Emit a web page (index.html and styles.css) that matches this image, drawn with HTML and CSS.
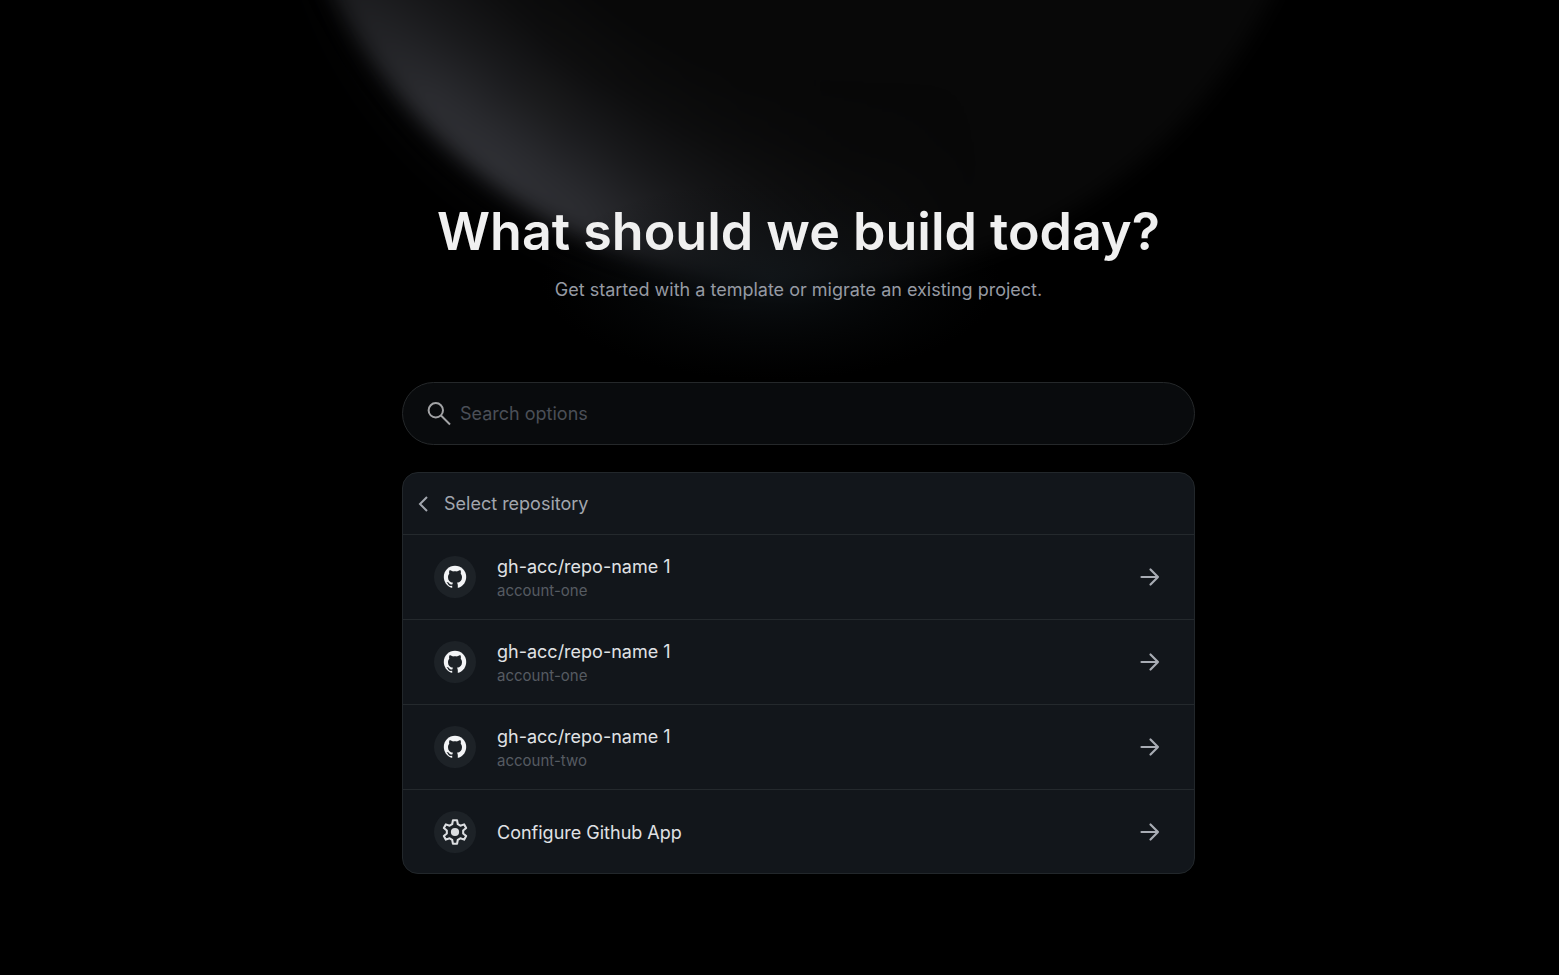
FILE: index.html
```html
<!DOCTYPE html>
<html lang="en">
<head>
<meta charset="utf-8">
<meta name="viewport" content="width=device-width, initial-scale=1">
<title>New project</title>
<link rel="stylesheet" href="styles.css">
</head>
<body>
<svg class="symbols" aria-hidden="true">
  <symbol id="github" viewBox="0 0 24 24">
    <circle cx="12" cy="12" r="11.200" fill="#f3f4f6"/>
    <path d="M9.200 24v-3.200c-2.800.5-3.700-.8-4.300-2-.3-.6-.7-1-1.300-1.400 1.200-.5 2.100.2 2.700 1.100.8 1.200 1.700 1.300 3 .9.1-.8.400-1.300.8-1.700-3.300-.4-5.100-2.100-5.100-5.500 0-1.500.5-2.600 1.300-3.500-.3-1-.3-2.200.2-3.500 1.300 0 2.400.6 3.500 1.300 1.300-.3 2.700-.3 4 0 1.100-.7 2.200-1.300 3.500-1.300.5 1.300.5 2.500.2 3.500.8.900 1.300 2 1.300 3.500 0 3.400-1.800 5.100-5.100 5.500.6.600.9 1.400.9 2.500V24Z" fill="#1d2227"/>
  </symbol>
  <symbol id="arrow" viewBox="0 0 24 24"><path d="M3.500 12H20M12.500 4.500 20 12l-7.500 7.500" fill="none" stroke="currentColor" stroke-width="2.200" stroke-linecap="round" stroke-linejoin="round"/></symbol>
</svg>
<main class="page">
  <svg class="planet" viewBox="0 0 1200 420" aria-hidden="true">
    <defs>
      <radialGradient id="rim" gradientUnits="userSpaceOnUse" cx="665" cy="-330" r="635">
        <stop offset=".64" stop-color="#303136" stop-opacity="0"/>
        <stop offset=".76" stop-color="#303136" stop-opacity=".16"/>
        <stop offset=".86" stop-color="#303136" stop-opacity=".52"/>
        <stop offset=".94" stop-color="#303136" stop-opacity=".9"/>
        <stop offset="1" stop-color="#323338"/>
      </radialGradient>
      <radialGradient id="spot" gradientUnits="userSpaceOnUse" cx="300" cy="160" r="480">
        <stop offset="0" stop-color="#fff"/>
        <stop offset=".2" stop-color="#fff" stop-opacity=".92"/>
        <stop offset=".42" stop-color="#fff" stop-opacity=".62"/>
        <stop offset=".7" stop-color="#fff" stop-opacity=".22"/>
        <stop offset="1" stop-color="#fff" stop-opacity="0"/>
      </radialGradient>
      <radialGradient id="halo">
        <stop offset="0" stop-color="#11161a" stop-opacity=".8"/>
        <stop offset=".5" stop-color="#0d1114" stop-opacity=".4"/>
        <stop offset="1" stop-color="#0a0c0e" stop-opacity="0"/>
      </radialGradient>
      <mask id="spotlight" maskUnits="userSpaceOnUse" x="-200" y="-900" width="1600" height="1400"><rect x="-200" y="-900" width="1600" height="1400" fill="url(#spot)"/></mask>
      <filter id="soft" filterUnits="userSpaceOnUse" x="0" y="-200" width="1200" height="620" color-interpolation-filters="sRGB"><feGaussianBlur stdDeviation="10"/></filter>
      <filter id="wide" filterUnits="userSpaceOnUse" x="0" y="-200" width="1200" height="620" color-interpolation-filters="sRGB"><feGaussianBlur stdDeviation="32"/></filter>
    </defs>
    <g filter="url(#wide)" opacity=".3">
      <circle cx="602" cy="-240" r="525" fill="url(#rim)" mask="url(#spotlight)"/>
    </g>
    <g filter="url(#soft)">
      <circle cx="602" cy="-240" r="525" fill="#080808"/>
      <circle cx="602" cy="-240" r="525" fill="url(#rim)" mask="url(#spotlight)"/>
    </g>
    <ellipse cx="570" cy="280" rx="230" ry="100" fill="url(#halo)"/>
  </svg>
  <div class="content">
    <header class="intro">
      <h1 class="title">What should we build today?</h1>
      <p class="subtitle">Get started with a template or migrate an existing project.</p>
    </header>
    <label class="search">
      <svg class="search-icon" viewBox="0 0 24 24" aria-hidden="true"><circle cx="8.800" cy="8.300" r="7.200"/><path d="m14 13.500 9 9"/></svg>
      <input class="search-input" type="search" placeholder="Search options" aria-label="Search options">
    </label>
    <section class="panel" aria-label="Select repository">
      <button class="back" type="button">
        <svg class="chevron" viewBox="0 0 10 16" aria-hidden="true"><path d="M9 1 2 8l7 7"/></svg>
        Select repository
      </button>
      <button class="row" type="button">
        <span class="badge"><svg class="github" aria-hidden="true"><use href="#github"/></svg></span>
        <span class="text"><span class="name">gh-acc/repo-name 1</span><span class="account">account-one</span></span>
        <svg class="arrow" aria-hidden="true"><use href="#arrow"/></svg>
      </button>
      <button class="row" type="button">
        <span class="badge"><svg class="github" aria-hidden="true"><use href="#github"/></svg></span>
        <span class="text"><span class="name">gh-acc/repo-name 1</span><span class="account">account-one</span></span>
        <svg class="arrow" aria-hidden="true"><use href="#arrow"/></svg>
      </button>
      <button class="row" type="button">
        <span class="badge"><svg class="github" aria-hidden="true"><use href="#github"/></svg></span>
        <span class="text"><span class="name">gh-acc/repo-name 1</span><span class="account">account-two</span></span>
        <svg class="arrow" aria-hidden="true"><use href="#arrow"/></svg>
      </button>
      <button class="row" type="button">
        <span class="badge"><svg class="gear" viewBox="-12 -12 24 24" aria-hidden="true"><path d="M-2.600-7.200-1.900-10.800H1.900L2.600-7.200 4.940-5.850 8.400-7.050 10.300-3.750 7.540-1.350V1.350L10.300 3.750 8.400 7.050 4.940 5.850 2.600 7.200 1.900 10.800H-1.900L-2.600 7.200-4.940 5.850-8.400 7.050-10.300 3.750-7.540 1.350V-1.350L-10.300-3.750-8.400-7.050-4.940-5.850Z" fill="none" stroke="currentColor" stroke-width="1.900" stroke-linejoin="round"/><circle r="3.800" fill="currentColor"/></svg></span>
        <span class="text"><span class="name">Configure Github App</span></span>
        <svg class="arrow" aria-hidden="true"><use href="#arrow"/></svg>
      </button>
    </section>
  </div>
</main>
</body>
</html>
```
FILE: styles.css
```css
* { box-sizing: border-box; }
body {
  margin: 0;
  background: #000;
  color: #e0e2e5;
  font-family: Inter, "Liberation Sans", sans-serif;
  font-size: 18px;
  line-height: 24px;
}
button, input { font: inherit; color: inherit; }
.symbols { position: absolute; width: 0; height: 0; }
.page {
  position: relative;
  min-height: 100vh;
  padding: 200px 0 100px 38px;
  overflow: hidden;
}
.planet {
  position: absolute;
  top: 0;
  left: calc(50% + 21px);
  width: 1200px;
  height: 420px;
  transform: translateX(-50%);
}
.content {
  position: relative;
  width: 100%;
  max-width: 793px;
  margin: 0 auto;
}
.intro { text-align: center; }
.title {
  margin: 0;
  color: #f0f0f0;
  font-size: 52px;
  font-weight: 600;
  line-height: 64px;
}
.subtitle { margin: 14px 0 80px; color: #969aa3; }
.search {
  display: flex;
  align-items: center;
  gap: 9px;
  height: 63px;
  padding: 0 24px;
  border: 1px solid #25282a;
  border-radius: 32px;
  background: #090b0d;
}
.search-icon {
  flex: none;
  width: 24px;
  height: 24px;
  fill: none;
  stroke: #a2a3a5;
  stroke-width: 2;
}
.search-input {
  flex: 1;
  min-width: 0;
  padding: 0;
  border: 0;
  outline: 0;
  background: none;
}
.search-input::placeholder { color: #4b4f57; opacity: 1; }
.panel {
  margin-top: 27px;
  border: 1px solid #22272b;
  border-radius: 16px;
  background: #12161b;
  overflow: hidden;
}
.back, .row {
  display: flex;
  align-items: center;
  width: 100%;
  border: 0;
  background: none;
  text-align: left;
}
.back {
  gap: 16px;
  height: 61px;
  padding: 0 15px;
  color: #a2a6ae;
}
.chevron {
  width: 10px;
  height: 16px;
  fill: none;
  stroke: currentColor;
  stroke-width: 2;
}
.row {
  height: 85px;
  padding: 0 32px 0 31px;
  border-top: 1px solid #24292d;
}
.row:last-child { height: 84px; }
.badge {
  display: grid;
  place-items: center;
  width: 42px;
  height: 42px;
  margin-right: 21px;
  border-radius: 50%;
  background: #1d2227;
}
.github { width: 24px; height: 24px; }
.gear { width: 26px; height: 26px; color: #dcdee1; }
.text {
  display: flex;
  flex: 1;
  flex-direction: column;
  padding-top: 3px;
}
.account { color: #565b62; font-size: 15px; }
.arrow { width: 24px; height: 24px; color: #a8acb4; }
```
